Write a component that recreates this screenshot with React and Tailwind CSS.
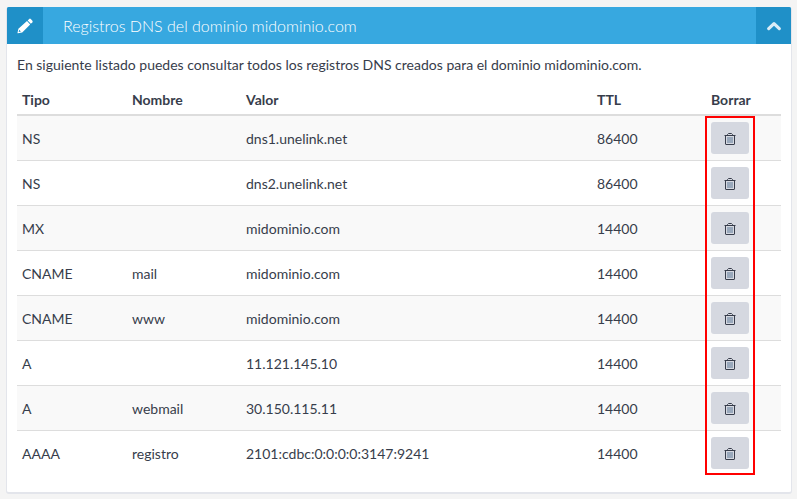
import React, { useState } from 'react';

const records = [
  { type: 'NS', name: '', value: 'dns1.unelink.net', ttl: 86400 },
  { type: 'NS', name: '', value: 'dns2.unelink.net', ttl: 86400 },
  { type: 'MX', name: '', value: 'midominio.com', ttl: 14400 },
  { type: 'CNAME', name: 'mail', value: 'midominio.com', ttl: 14400 },
  { type: 'CNAME', name: 'www', value: 'midominio.com', ttl: 14400 },
  { type: 'A', name: '', value: '11.121.145.10', ttl: 14400 },
  { type: 'A', name: 'webmail', value: '30.150.115.11', ttl: 14400 },
  { type: 'AAAA', name: 'registro', value: '2101:cdbc:0:0:0:0:3147:9241', ttl: 14400 },
];

const PencilIcon = () => (
  <svg viewBox="0 0 16 16" className="h-4 w-4" fill="currentColor" aria-hidden="true">
    <path d="M12.2.9q.8-.6 1.6.1l1.6 1.7q.6.8 0 1.5l-1.5 1.5-3.2-3.3z" />
    <path d="M10 3.1l3.2 3.3-8 8-4.2.9q-.6 0-.5-.6l.9-4zM2.2 11.8l-.5 2.3 2.2-.5z" fillRule="evenodd" />
  </svg>
);

const ChevronUpIcon = () => (
  <svg viewBox="0 0 16 16" className="h-4 w-4" fill="none" stroke="currentColor" aria-hidden="true">
    <path d="M2.7 10.6l5.3-5 5.3 5" strokeWidth="3.2" strokeLinejoin="round" strokeLinecap="round" />
  </svg>
);

const TrashIcon = () => (
  <svg viewBox="0 0 14 14" className="h-3.5 w-3.5" fill="none" stroke="currentColor" aria-hidden="true">
    <path d="M1.5 3.5h11M4.5 3.5v-1l1-1h3l1 1v1M2.5 3.5v8.5q0 .5.5.5h8q.5 0 .5-.5V3.5" />
    <path d="M5 5v6M7 5v6M9 5v6" stroke="#5d7896" />
  </svg>
);

const App = () => {
  const [open, setOpen] = useState(true);
  const [rows, setRows] = useState(records);

  const removeRow = (row) => {
    setRows(prev => prev.filter(item => item !== row));
  };

  return (
    <div className="min-h-screen bg-[#f4f4f4] pt-[7px] pr-[5px] pb-[5px] pl-1.5 font-['Lato','Liberation_Sans',sans-serif] text-sm text-[#373d4b]">
      <section className="rounded-[3px] border-x border-b-2 border-[#e3e5eb] bg-white">
        <header className="flex h-[37px] items-stretch overflow-hidden rounded-t-[2px] bg-[#37a8e0] text-white">
          <span className="flex w-9 items-center justify-center bg-[#1f90c8]">
            <PencilIcon />
          </span>
          <h2 className="flex flex-1 items-center px-5 text-base font-light">
            Registros DNS del dominio midominio.com
          </h2>
          <button
            type="button"
            aria-label="Contraer"
            aria-expanded={open}
            onClick={() => setOpen(!open)}
            className="flex w-[35px] items-center justify-center bg-[#1f90c8] text-[#d9ecf7]"
          >
            <ChevronUpIcon />
          </button>
        </header>

        {open && (
          <div className="px-2.5 pt-[11px] pb-[17px]">
            <p className="leading-5">
              En siguiente listado puedes consultar todos los registros DNS creados para el dominio midominio.com.
            </p>

            <div className="relative mt-2.5">
              <table className="w-full table-fixed border-separate border-spacing-0 text-left">
                <thead>
                  <tr className="*:h-[31px] *:border-b-2 *:border-[#dddddd] *:px-[5px] *:font-bold">
                    <th className="w-[110px]">Tipo</th>
                    <th className="w-[114px]">Nombre</th>
                    <th>Valor</th>
                    <th className="w-[114px]">TTL</th>
                    <th className="w-[75px]">Borrar</th>
                  </tr>
                </thead>
                <tbody>
                  {rows.map(row => (
                    <tr
                      key={row.value + row.type + row.name}
                      className="odd:bg-[#f9f9f9] *:border-b *:border-[#dddddd] *:px-[5px] last:*:border-b-0"
                    >
                      <td className="pt-2 pb-1.5">{row.type}</td>
                      <td className="pt-2 pb-1.5">{row.name}</td>
                      <td className="pt-2 pb-1.5">{row.value}</td>
                      <td className="pt-2 pb-1.5">{row.ttl}</td>
                      <td className="py-1.5">
                        <button
                          type="button"
                          aria-label={`Borrar ${row.type} ${row.value}`}
                          onClick={() => removeRow(row)}
                          className="flex h-8 w-[38px] items-center justify-center rounded-[3px] bg-[#d5d8e0] pt-0.5 hover:bg-[#c6cad4]"
                        >
                          <TrashIcon />
                        </button>
                      </td>
                    </tr>
                  ))}
                </tbody>
              </table>

              {/* Highlight around the delete buttons */}
              <div className="pointer-events-none absolute top-[31px] right-[26px] bottom-0 w-[50px] border-2 border-[#ff0000]" />
            </div>
          </div>
        )}
      </section>
    </div>
  );
};

export default App;
